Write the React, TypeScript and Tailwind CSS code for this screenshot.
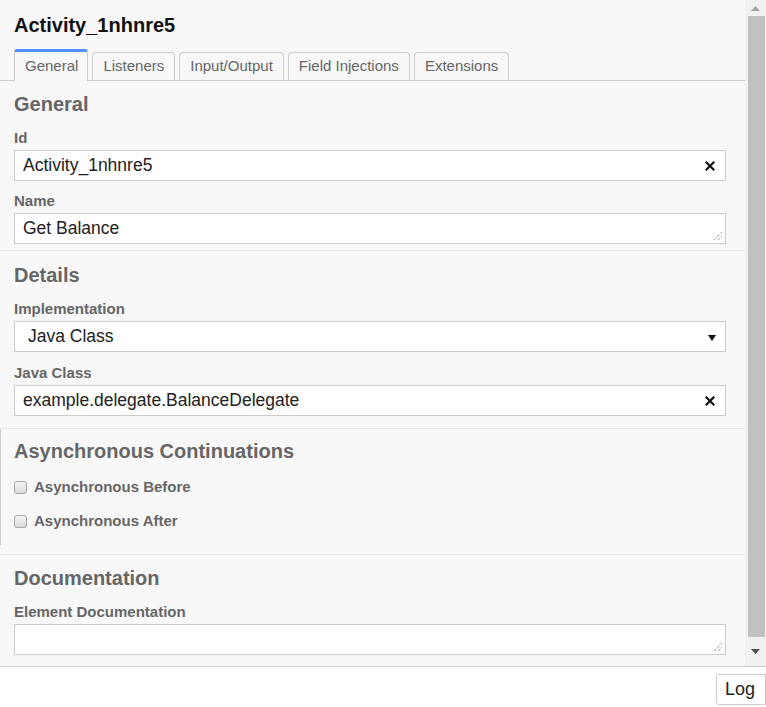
import React from "react";

const tabs = ["General", "Listeners", "Input/Output", "Field Injections", "Extensions"];

const ClearIcon: React.FC = () => (
  <svg width="10" height="10" viewBox="0 0 10 10" className="absolute right-[10px] top-1/2 -translate-y-1/2">
    <path d="M1.5 1.5 L8.5 8.5 M8.5 1.5 L1.5 8.5" stroke="#111" strokeWidth="2.2" strokeLinecap="square" />
  </svg>
);

const ResizeGrip: React.FC = () => (
  <svg width="10" height="10" viewBox="0 0 10 10" className="absolute right-[2px] bottom-[2px]">
    <path d="M1 9 L9 1 M5 9 L9 5" stroke="#777" strokeWidth="1" strokeDasharray="1 1" />
  </svg>
);

const Label: React.FC<{ text: string; className?: string }> = ({ text, className }) => (
  <div className={`text-[15px] leading-[17px] font-bold text-[#666] mb-[4px] ${className ?? ""}`}>{text}</div>
);

const TextField: React.FC<{ value: string; clear?: boolean }> = ({ value, clear }) => (
  <div className="relative h-[31px] bg-white border border-[#ccc] flex items-center pl-[8px] text-[17.5px] text-[#222]">
    {value}
    {clear && <ClearIcon />}
  </div>
);

const TextArea: React.FC<{ value?: string }> = ({ value }) => (
  <div className="relative h-[31px] bg-white border border-[#ccc] flex items-center pl-[8px] text-[17.5px] text-[#222]">
    {value}
    <ResizeGrip />
  </div>
);

const Checkbox: React.FC<{ label: string }> = ({ label }) => (
  <div className="flex items-center h-[20px] mt-[14px]">
    <div className="w-[13px] h-[13px] rounded-[3px] border border-[#a6a6a6] bg-gradient-to-b from-[#f5f5f5] to-[#dadada]" />
    <span className="ml-[7px] text-[15px] font-bold text-[#666]">{label}</span>
  </div>
);

const Heading: React.FC<{ text: string }> = ({ text }) => (
  <h2 className="text-[20px] leading-[24px] font-bold text-[#666]">{text}</h2>
);

export default function App() {
  return (
    <div
      className="w-[766px] h-[707px] bg-white flex flex-col overflow-hidden"
      style={{ fontFamily: '"Liberation Sans", Arial, sans-serif' }}
    >
      <div className="h-[667px] bg-[#f8f8f8] border-b border-[#ccc] flex">
        {/* Panel content */}
        <div className="flex-1 overflow-hidden">
          <div className="px-[14px] pt-[13px] text-[20px] leading-[24px] font-bold text-[#111]">
            Activity_1nhnre5
          </div>

          {/* Tabs */}
          <div className="mt-[12px] border-b border-[#ccc] flex items-end gap-[4px] pl-[14px]">
            {tabs.map((t, i) =>
              i === 0 ? (
                <div
                  key={t}
                  className="h-[32px] -mb-px bg-[#f8f8f8] border-x border-[#ccc] border-t-[3px] border-t-[#4d90fe] rounded-t-[3px] pl-[10px] pr-[9px] flex items-center text-[15px] text-[#666]"
                >
                  {t}
                </div>
              ) : (
                <div
                  key={t}
                  className="h-[28px] border-x border-t border-[#ccc] rounded-t-[4px] px-[10px] flex items-center text-[15px] text-[#666]"
                >
                  {t}
                </div>
              )
            )}
          </div>

          {/* General */}
          <div className="pt-[11px] pb-[6px] pl-[14px] pr-[19px] border-b border-[#e8e8e8]">
            <Heading text="General" />
            <Label text="Id" className="mt-[13px]" />
            <TextField value="Activity_1nhnre5" clear />
            <Label text="Name" className="mt-[11px]" />
            <TextArea value="Get Balance" />
          </div>

          {/* Details */}
          <div className="pt-[12px] pb-[12px] pl-[14px] pr-[19px] border-b border-[#e8e8e8]">
            <Heading text="Details" />
            <Label text="Implementation" className="mt-[13px]" />
            <div className="relative h-[31px] bg-white border border-[#ccc] flex items-center pl-[13px] text-[17.5px] text-[#222]">
              Java Class
              <svg width="8" height="6" viewBox="0 0 8 6" className="absolute right-[9px] top-[13px]">
                <path d="M0 0 H8 L4 6 Z" fill="#111" />
              </svg>
            </div>
            <Label text="Java Class" className="mt-[12px]" />
            <TextField value="example.delegate.BalanceDelegate" clear />
          </div>

          {/* Asynchronous Continuations */}
          <div className="pb-[9px] border-b border-[#e8e8e8]">
            <div className="border-l border-[#ccc] pt-[10px] pb-[14px] pl-[13px] pr-[19px]">
              <Heading text="Asynchronous Continuations" />
              <Checkbox label="Asynchronous Before" />
              <Checkbox label="Asynchronous After" />
            </div>
          </div>

          {/* Documentation */}
          <div className="pt-[11px] pl-[14px] pr-[19px]">
            <Heading text="Documentation" />
            <Label text="Element Documentation" className="mt-[13px]" />
            <TextArea />
          </div>
        </div>

        {/* Scrollbar */}
        <div className="w-[21px] bg-[#f1f1f1] flex flex-col items-center">
          <div className="h-[16px] flex items-center justify-center">
            <svg width="9" height="5" viewBox="0 0 9 5">
              <path d="M0 5 L4.5 0 L9 5 Z" fill="#a3a3a3" />
            </svg>
          </div>
          <div className="w-[17px] h-[621px] bg-[#c1c1c1] ml-[1px]" />
          <div className="flex-1 flex items-center justify-center">
            <svg width="9" height="5" viewBox="0 0 9 5">
              <path d="M0 0 L4.5 5 L9 0 Z" fill="#505050" />
            </svg>
          </div>
        </div>
      </div>

      <div className="flex justify-end pt-[7px]">
        <button className="h-[31px] w-[50px] bg-white border border-[#ccc] rounded-l-[3px] text-[18px] text-[#222] flex items-center justify-center pr-[2px]">
          Log
        </button>
      </div>
    </div>
  );
}
